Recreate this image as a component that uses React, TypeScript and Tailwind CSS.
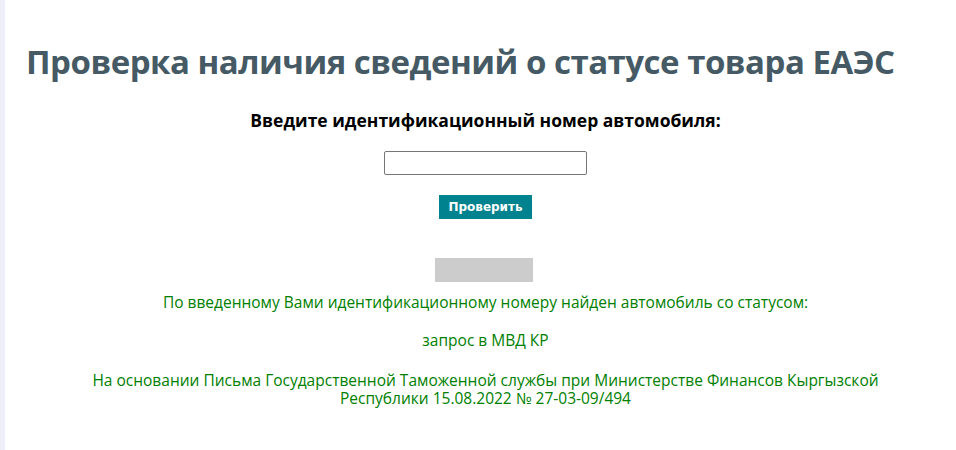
export default function App() {
  return (
    <div className="flex min-h-[450px] bg-white" style={{ fontFamily: '"Open Sans", sans-serif' }}>
      <div className="w-[5px] shrink-0 bg-[#eeeef8]" />
      <main className="flex-1 pl-[21px] pr-[11px]">
        <h1 className="mt-[38px] whitespace-nowrap text-[33px] font-bold leading-[48px] tracking-[-0.5px] text-[#455a64]">
          Проверка наличия сведений о статусе товара ЕАЭС
        </h1>
        <div className="flex flex-col items-center">
          <p className="mt-[22px] text-[17.5px] font-bold leading-[24px] text-black">
            Введите идентификационный номер автомобиля:
          </p>
          <input
            type="text"
            className="mt-[19px] h-[24px] w-[203px] rounded-[2px] border border-[#767676] bg-white px-1 text-sm"
          />
          <button
            className="mt-[20px] h-[24px] w-[93px] bg-[#00838f] text-[12px] font-bold text-white"
            style={{ fontFamily: '"DejaVu Sans", Verdana, sans-serif' }}
          >
            Проверить
          </button>
          <div className="mr-[4px] mt-[39px] h-[24px] w-[98px] bg-[#cccccc]" />
          <div className="mt-[11px] text-center text-[15.5px] leading-[18px] text-[#008000]">
            <p>По введенному Вами идентификационному номеру найден автомобиль со статусом:</p>
            <p className="mt-[20px]">запрос в МВД КР</p>
            <p className="mx-auto mt-[22px] max-w-[800px]">
              На основании Письма Государственной Таможенной службы при Министерстве Финансов Кыргызской Республики 15.08.2022 № 27-03-09/494
            </p>
          </div>
        </div>
      </main>
    </div>
  );
}
